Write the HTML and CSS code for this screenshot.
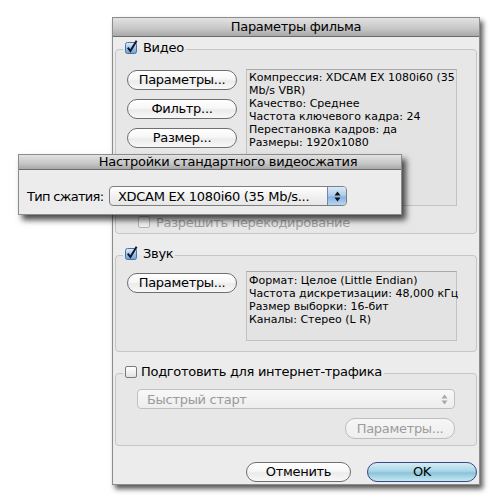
FILE: index.html
```html
<!DOCTYPE html>
<html lang="ru">
<head>
  <meta charset="UTF-8">
  <title>Параметры фильма</title>
  <link rel="stylesheet" href="styles.css">
</head>
<body>
  <div class="desk">

    <div class="window movie">
      <div class="titlebar">Параметры фильма</div>
      <div class="content">

        <fieldset class="group video">
          <legend><span class="legend-in">
            <svg class="check" width="14" height="14" viewBox="0 0 14 14">
              <defs>
                <linearGradient id="cbOn" x1="0" y1="0" x2="0" y2="1">
                  <stop offset="0" stop-color="#e4f0fb"/>
                  <stop offset="0.5" stop-color="#9cc5ea"/>
                  <stop offset="1" stop-color="#6aa3da"/>
                </linearGradient>
              </defs>
              <rect x="0.5" y="2.5" width="11" height="11" rx="2" fill="url(#cbOn)" stroke="#4f6f9c"/>
              <path d="M2.8 7.6 L5.4 11 L11.6 0.8" fill="none" stroke="#10182a" stroke-width="2"/>
            </svg>Видео</span></legend>
          <div class="inner video-inner">
            <div class="row">
              <div class="btn-col">
                <button class="btn">Параметры...</button>
                <button class="btn">Фильтр...</button>
                <button class="btn">Размер...</button>
              </div>
              <div class="info video-info">
                <div>Компрессия: XDCAM EX 1080i60 (35</div>
                <div>Mb/s VBR)</div>
                <div>Качество: Среднее</div>
                <div>Частота ключевого кадра: 24</div>
                <div>Перестановка кадров: да</div>
                <div>Размеры: 1920x1080</div>
              </div>
            </div>
            <div class="check-row disabled">
              <span class="box"></span>Разрешить перекодирование
            </div>
          </div>
        </fieldset>

        <fieldset class="group sound">
          <legend><span class="legend-in">
            <svg class="check" width="14" height="14" viewBox="0 0 14 14">
              <rect x="0.5" y="2.5" width="11" height="11" rx="2" fill="url(#cbOn)" stroke="#4f6f9c"/>
              <path d="M2.8 7.6 L5.4 11 L11.6 0.8" fill="none" stroke="#10182a" stroke-width="2"/>
            </svg>Звук</span></legend>
          <div class="inner sound-inner">
            <div class="row">
              <div class="btn-col">
                <button class="btn">Параметры...</button>
              </div>
              <div class="info sound-info">
                <div>Формат: Целое (Little Endian)</div>
                <div>Частота дискретизации: 48,000 кГц</div>
                <div>Размер выборки: 16-бит</div>
                <div>Каналы: Стерео (L R)</div>
              </div>
            </div>
          </div>
        </fieldset>

        <fieldset class="group web">
          <legend><span class="legend-in"><span class="box"></span>Подготовить для интернет-трафика</span></legend>
          <div class="inner web-inner">
            <div class="popup off">
              <span class="popup-text">Быстрый старт</span>
              <span class="popup-arrows">
                <svg width="7" height="11" viewBox="0 0 7 11"><path d="M0.5 4.5 L3.5 0.5 L6.5 4.5 Z M0.5 6.5 L3.5 10.5 L6.5 6.5 Z" fill="#a8a8a8"/></svg>
              </span>
            </div>
            <div class="web-btn">
              <button class="btn off">Параметры...</button>
            </div>
          </div>
        </fieldset>

        <div class="actions">
          <button class="btn cancel">Отменить</button>
          <button class="btn default">OK</button>
        </div>

      </div>
    </div>

    <div class="window sheet">
      <div class="titlebar">Настройки стандартного видеосжатия</div>
      <div class="sheet-body">
        <span class="sheet-label">Тип сжатия:</span>
        <div class="popup">
          <span class="popup-text">XDCAM EX 1080i60 (35 Mb/s...</span>
          <span class="popup-arrows blue">
            <svg width="7" height="11" viewBox="0 0 7 11"><path d="M0.5 4.5 L3.5 0.5 L6.5 4.5 Z M0.5 6.5 L3.5 10.5 L6.5 6.5 Z" fill="#111"/></svg>
          </span>
        </div>
      </div>
    </div>

  </div>
</body>
</html>
```

FILE: styles.css
```css
* {
  box-sizing: border-box;
}

body {
  margin: 0;
  background: #fff;
  font-family: "DejaVu Sans", "Liberation Sans", sans-serif;
  font-size: 13px;
  letter-spacing: -0.3px;
  color: #000;
}

.desk {
  position: relative;
  width: 500px;
  height: 500px;
}

/* windows sit on a free canvas */
.window {
  position: absolute;
  background: #ececec;
  border: 1px solid #8c8c8c;
  box-shadow: 3px 4px 5px rgba(0, 0, 0, 0.65);
}

.movie {
  left: 112px;
  top: 17px;
  width: 368px;
  height: 468px;
}

.sheet {
  left: 18px;
  top: 154px;
  width: 384px;
  height: 61px;
  box-shadow: 4px 5px 6px rgba(0, 0, 0, 0.7);
}

.titlebar {
  height: 19px;
  line-height: 18px;
  text-align: center;
  background: linear-gradient(#e2e2e2, #c6c6c6 60%, #a8a8a8);
  border-bottom: 1px solid #6c6c6c;
  white-space: nowrap;
}

.sheet .titlebar {
  height: 15px;
  line-height: 14px;
  padding-left: 36px;
}

.content {
  padding: 3px 2px 0 2px;
}

/* group boxes */
.group {
  margin: 0;
  padding: 0;
  min-width: 0;
  border: 1px solid #c6c6c6;
  border-radius: 4px;
  background: #e7e7e7;
}

.group legend {
  margin-left: 7px;
  padding: 0 2px;
  line-height: 16px;
}

.legend-in {
  display: inline-flex;
  align-items: center;
  gap: 4px;
}

.legend-in .check {
  margin-top: -2px;
}

.sound {
  margin-top: 12px;
}

.web {
  margin-top: 12px;
}

.inner {
  padding-left: 11px;
}

.video-inner {
  padding-top: 11px;
  padding-bottom: 3px;
}

.sound-inner {
  padding-top: 7px;
  padding-bottom: 10px;
}

.web-inner {
  padding: 7px 21px 6px 21px;
}

.row {
  display: flex;
  align-items: flex-start;
  gap: 9px;
}

.btn-col {
  display: flex;
  flex-direction: column;
  gap: 9px;
  margin-top: 1px;
}

.sound .btn-col {
  margin-top: 2px;
}

/* aqua push buttons */
.btn {
  width: 110px;
  height: 20px;
  padding: 0;
  border: 1px solid #6f6f6f;
  border-radius: 10px;
  background: linear-gradient(#ffffff, #f7f7f7 45%, #ebebeb 55%, #f8f8f8);
  font-family: inherit;
  font-size: 13px;
  letter-spacing: -0.3px;
  line-height: 18px;
  color: #000;
}

.btn.off {
  height: 21px;
  border-color: #bdbdbd;
  background: linear-gradient(#f6f6f6, #eeeeee);
  color: #9c9c9c;
}

.btn.cancel {
  width: 105px;
}

.btn.default {
  border-color: #3a4883;
  background: linear-gradient(#d4eef6, #a9d6e6 45%, #8cc3d8 55%, #c4e9f2);
}

.info {
  background: #e3e3e3;
  border: 1px solid #c2c2c2;
  border-top-color: #a9a9a9;
  width: 211px;
  padding: 1px 0 0 2px;
  font-size: 11px;
  letter-spacing: 0;
  line-height: 13px;
  white-space: nowrap;
}

.video-info {
  height: 137px;
}

.sound-info {
  height: 70px;
  padding-top: 2px;
}

.check-row {
  display: flex;
  align-items: center;
  gap: 6px;
  height: 16px;
  margin-top: 8px;
  padding-left: 11px;
}

.disabled {
  color: #9e9e9e;
}

.box {
  display: inline-block;
  width: 12px;
  height: 12px;
  border: 1px solid #7b7b7b;
  border-radius: 2px;
  background: linear-gradient(#ffffff, #e2e2e2);
}

.disabled .box {
  border-color: #b4b4b4;
  background: #f0f0f0;
}

/* popup menus */
.popup {
  display: flex;
  align-items: center;
  height: 20px;
  border: 1px solid #7e7e7e;
  border-radius: 4px;
  background: linear-gradient(#ffffff, #f1f1f1 50%, #e6e6e6);
  overflow: hidden;
}

.popup-text {
  flex: 1;
  padding-left: 8px;
  white-space: nowrap;
}

.popup-arrows {
  display: flex;
  align-items: center;
  justify-content: center;
  width: 19px;
  height: 100%;
}

.popup-arrows.blue {
  border-left: 1px solid #6f86ad;
  background: linear-gradient(#dbeaf7, #a9c9ea 50%, #86b2e0 55%, #b7d6f2);
}

.popup.off {
  border-color: #c0c0c0;
  background: linear-gradient(#f8f8f8, #ededed);
  color: #9a9a9a;
}

.popup.off .popup-text {
  padding-left: 9px;
}

.web-btn {
  display: flex;
  justify-content: flex-end;
  margin-top: 9px;
}

.actions {
  display: flex;
  justify-content: flex-end;
  gap: 16px;
  margin-top: 16px;
}

.sheet-body {
  display: flex;
  align-items: center;
  gap: 6px;
  padding: 16px 0 0 8px;
}

.sheet-label {
  width: 76px;
  letter-spacing: -0.7px;
  white-space: nowrap;
}

.sheet .popup {
  width: 238px;
}
```
